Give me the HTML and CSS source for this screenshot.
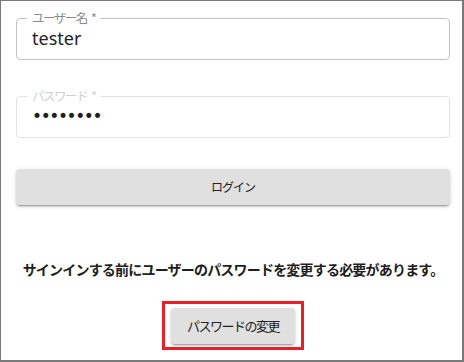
FILE: index.html
```html
<!DOCTYPE html>
<html lang="ja">
<head>
    <meta charset="UTF-8">
    <title>ログイン</title>
    <link rel="stylesheet" href="styles.css">
</head>
<body>
    <div class="frame">
        <form class="login-form">
            <fieldset class="field">
                <legend class="field-label">ユーザー名 *</legend>
                <div class="field-value">tester</div>
            </fieldset>
            <fieldset class="field field-muted">
                <legend class="field-label">パスワード *</legend>
                <div class="field-value password-dots">••••••••</div>
            </fieldset>
            <button type="button" class="btn btn-wide">ログイン</button>
        </form>
        <p class="notice">サインインする前にユーザーのパスワードを変更する必要があります。</p>
        <div class="highlight-row">
            <div class="highlight">
                <button type="button" class="btn btn-small">パスワードの変更</button>
            </div>
        </div>
    </div>
</body>
</html>
```

FILE: styles.css
```css
/* Base */
:root {
    --frame-border: #7a7a7a;
    --field-border: #c4c4c4;
    --field-border-muted: #e2e2e2;
    --label-color: #8a8a8a;
    --label-muted: #cfcfcf;
    --text-dark: #222222;
    --btn-bg: #e0e0e0;
    --alert-red: #e8202a;
}

* {
    box-sizing: border-box;
}

html, body {
    margin: 0;
    padding: 0;
    background: #ffffff;
}

body {
    width: 464px;
    height: 362px;
    font-family: "Noto Sans CJK JP", "Noto Sans", sans-serif;
    color: var(--text-dark);
}

.frame {
    width: 464px;
    height: 362px;
    border-style: solid;
    border-color: var(--frame-border);
    border-width: 1px 2px 2px 1px;
    padding: 10px 12px 0 15px;
}

/* Form fields (outlined) */
.login-form {
    display: flex;
    flex-direction: column;
}

.field {
    margin: 0;
    padding: 0 15px 5px;
    border: 1px solid var(--field-border);
    border-radius: 4px;
    min-width: 0;
}

.field + .field {
    margin-top: 29px;
}

.field-label {
    margin-left: -5px;
    padding: 0 5px;
    font-size: 12.5px;
    line-height: 14px;
    letter-spacing: -1.5px;
    word-spacing: 3px;
    color: var(--label-color);
}

.field-muted {
    border-color: var(--field-border-muted);
}

.field-muted .field-label {
    color: var(--label-muted);
}

.field-value {
    font-family: "Noto Sans", sans-serif;
    font-size: 18px;
    line-height: 24px;
    height: 29px;
    padding-top: 1px;
}

.password-dots {
    font-family: "DejaVu Sans", sans-serif;
    font-size: 17px;
    letter-spacing: -1.4px;
    color: #1f1f1f;
}

/* Buttons */
.btn {
    font-family: "Noto Sans CJK JP", sans-serif;
    color: var(--text-dark);
    background: var(--btn-bg);
    border: none;
    border-radius: 4px;
    box-shadow: 0 3px 1px -2px rgba(0, 0, 0, 0.2), 0 2px 2px 0 rgba(0, 0, 0, 0.14), 0 1px 5px 0 rgba(0, 0, 0, 0.12);
    height: 36px;
    padding: 0 0 2px;
    cursor: pointer;
}

.btn-wide {
    margin-top: 31px;
    width: 100%;
    font-size: 12px;
    letter-spacing: -1px;
}

.btn-small {
    width: 124px;
    font-size: 13px;
    letter-spacing: -1.5px;
}

/* Notice */
.notice {
    margin: 54px 0 0;
    text-align: center;
    white-space: nowrap;
    font-size: 14px;
    line-height: 20px;
    font-weight: bold;
    letter-spacing: -0.8px;
    color: #1e1e1e;
}

.highlight-row {
    display: flex;
    justify-content: center;
    margin-top: 22px;
}

.highlight {
    border: 3px solid var(--alert-red);
    padding: 4px 6px 3px;
}
```
